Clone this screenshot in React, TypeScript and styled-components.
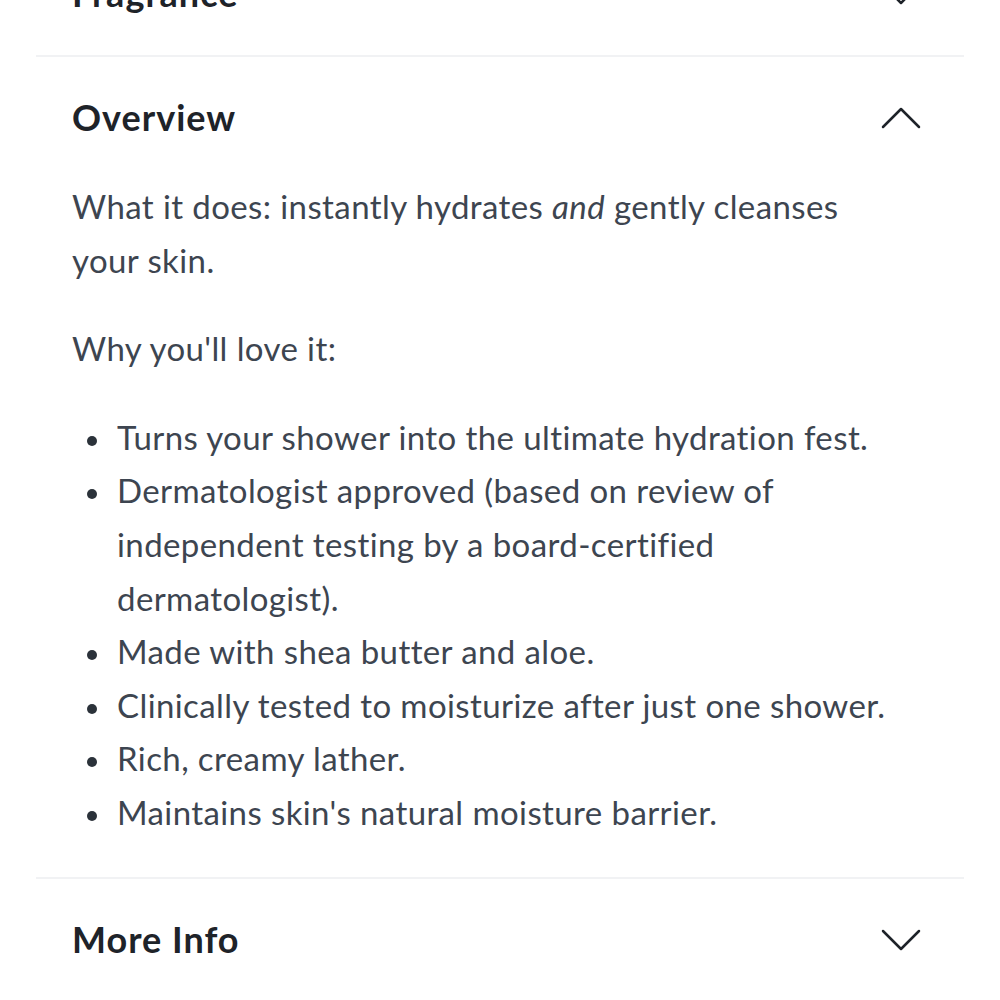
import React from 'react';
import styled, { createGlobalStyle } from 'styled-components';

const GlobalStyle = createGlobalStyle`
    html, body {
        margin: 0;
        padding: 0;
        background: #ffffff;
    }
    body {
        font-family: Lato, "Liberation Sans", sans-serif;
        overflow: hidden;
    }
`;

const Page = styled.div`
    width: 1000px;
    height: 1000px;
    overflow: hidden;
    background: #ffffff;
`;

// the list is scrolled so the first section's header sits half off the top
const Accordion = styled.div`
    margin: -67px 36px 0 36px;
`;

const Section = styled.section<{ $first?: boolean }>`
    border-top: ${(p) => (p.$first ? 'none' : '2px solid #f1f2f4')};
`;

const SectionHeader = styled.div`
    display: flex;
    align-items: center;
    justify-content: space-between;
    height: 122px;
    padding: 0 43px 0 36px;
    box-sizing: border-box;
    cursor: pointer;
`;

const Title = styled.h3`
    margin: -2px 0 0 0;
    font-size: 36px;
    font-weight: 700;
    color: #1e2329;
    letter-spacing: 1px;
`;

const Chevron = styled.svg`
    width: 40px;
    height: 22px;
    color: #1e2329;
    flex-shrink: 0;
`;

const Body = styled.div`
    padding: 1px 64px 37px 36px;
    font-size: 33px;
    line-height: 53.6px;
    letter-spacing: 0.4px;
    color: #3d4550;
`;

const Paragraph = styled.p`
    margin: 0 0 35px 0;
`;

const List = styled.ul`
    margin: 2px 0 0 0;
    padding: 0;
    list-style: none;
`;

const Item = styled.li`
    display: grid;
    grid-template-columns: 45px 1fr;
    align-items: start;

    &::before {
        content: '';
        width: 10px;
        height: 10px;
        margin: 25px 0 0 15px;
        border-radius: 50%;
        background: #2b323a;
    }
`;

const ChevronIcon: React.FC<{ open?: boolean }> = ({ open }) => (
    <Chevron viewBox="0 0 40 22" fill="none">
        <path
            d={open ? 'M2 20 L20 2 L38 20' : 'M2 2 L20 20 L38 2'}
            stroke="currentColor"
            strokeWidth="2.5"
            strokeLinecap="round"
            strokeLinejoin="round"
        />
    </Chevron>
);

const perks = [
    'Turns your shower into the ultimate hydration fest.',
    'Dermatologist approved (based on review of independent testing by a board-certified dermatologist).',
    'Made with shea butter and aloe.',
    'Clinically tested to moisturize after just one shower.',
    'Rich, creamy lather.',
    "Maintains skin's natural moisture barrier.",
];

const App: React.FC = () => {
    return (
        <Page>
            <GlobalStyle />
            <Accordion>
                <Section $first>
                    <SectionHeader>
                        <Title>Fragrance</Title>
                        <ChevronIcon />
                    </SectionHeader>
                </Section>
                <Section>
                    <SectionHeader>
                        <Title>Overview</Title>
                        <ChevronIcon open />
                    </SectionHeader>
                    <Body>
                        <Paragraph>
                            What it does: instantly hydrates <em>and</em> gently cleanses your skin.
                        </Paragraph>
                        <Paragraph>Why you'll love it:</Paragraph>
                        <List>
                            {perks.map((perk) => (
                                <Item key={perk}>{perk}</Item>
                            ))}
                        </List>
                    </Body>
                </Section>
                <Section>
                    <SectionHeader>
                        <Title>More Info</Title>
                        <ChevronIcon />
                    </SectionHeader>
                </Section>
            </Accordion>
        </Page>
    );
};

export default App;
